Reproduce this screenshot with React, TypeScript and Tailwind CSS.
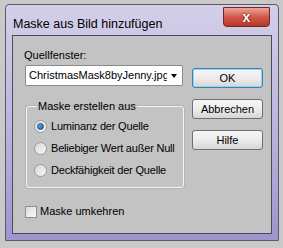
import React from "react";

const font = { fontFamily: '"Liberation Sans", Arial, sans-serif' };

function Radio({ label, checked }: { label: string; checked?: boolean }) {
  return (
    <div className="flex items-center h-[13px]">
      <span className="shrink-0 w-[13px] h-[13px] rounded-full border border-[#9a9a9a] bg-gradient-to-br from-[#d8d8d8] to-[#f8f8f8] flex items-center justify-center">
        {checked && (
          <span className="w-[7px] h-[7px] rounded-full bg-gradient-to-br from-[#6fb6e8] to-[#1a5fa0] border border-[#1c4f7f]" />
        )}
      </span>
      <span className="ml-[4px] text-[11px] leading-[13px] tracking-[-0.2px] whitespace-nowrap text-black">{label}</span>
    </div>
  );
}

function Button({ label, focused }: { label: string; focused?: boolean }) {
  return (
    <div
      className={`w-[71px] h-[20px] rounded-[3px] flex items-center justify-center text-[11px] text-black bg-gradient-to-b from-[#f6f6f6] via-[#ececec] to-[#d6d6d6] ${
        focused
          ? "border border-[#3c7fb1] shadow-[inset_0_0_0_1px_#9cd2f0]"
          : "border border-[#707070]"
      }`}
    >
      {label}
    </div>
  );
}

export default function App() {
  return (
    <div className="w-[283px] h-[248px] bg-[#c9c9c9] pt-[4px] pl-[5px] pr-[4px] pb-[7px]" style={font}>
      {/* window frame */}
      <div className="w-full h-full flex flex-col border border-[#5a5a66] bg-gradient-to-b from-[#d3cfe8] via-[#bdb5de] to-[#a093cf] rounded-t-[4px]">
        {/* title bar */}
        <div className="h-[30px] flex items-start pl-[7px] pr-[8px]">
          <span className="mt-[12px] text-[12.5px] leading-[14px] text-black">Maske aus Bild hinzufügen</span>
          <div className="ml-auto mt-[2px] w-[47px] h-[20px] rounded-b-[4px] border border-[#6e2a22] bg-gradient-to-b from-[#e8a59a] via-[#d2574a] to-[#b8372b] flex items-center justify-center">
            <span className="text-white text-[14px] font-bold leading-none drop-shadow-[0_0_1px_#5a1a14]">x</span>
          </div>
        </div>
        {/* client area */}
        <div className="flex-1 mx-[6px] mb-[6px] border border-[#4a4a58] bg-[#c3c3c3] flex pl-[11px] pt-[13px]">
          <div className="w-[159px] flex flex-col">
            <span className="text-[11px] leading-[13px] text-black">Quellfenster:</span>
            <div className="mt-[3px] ml-[1px] h-[21px] w-[158px] rounded-[2px] border border-[#8a8a8a] bg-white flex items-center pl-[3px] pr-[5px]">
              <span className="text-[11px] leading-[13px] text-black whitespace-nowrap overflow-hidden w-[138px]">ChristmasMask8byJenny.jpg</span>
              <span className="ml-auto w-0 h-0 border-l-[3.5px] border-r-[3.5px] border-t-[4px] border-l-transparent border-r-transparent border-t-black" />
            </div>
            <fieldset className="mt-[14px] ml-[2px] w-[158px] h-[88px] border border-[#f4f4f4] rounded-[3px] shadow-[0_0_0_1px_#b4b4b4] px-[7px] pt-[6px]">
              <legend className="ml-[3px] px-[1px] text-[11px] leading-[13px] text-black">Maske erstellen aus</legend>
              <div className="flex flex-col gap-[9px] mt-[1px]">
                <Radio label="Luminanz der Quelle" checked />
                <Radio label="Beliebiger Wert außer Null" />
                <Radio label="Deckfähigkeit der Quelle" />
              </div>
            </fieldset>
            <div className="mt-[17px] ml-[1px] flex items-center">
              <span className="w-[12px] h-[12px] border border-[#8e8f8f] bg-gradient-to-br from-[#dcdcdc] to-[#fafafa]" />
              <span className="ml-[3px] text-[11px] leading-[13px] text-black">Maske umkehren</span>
            </div>
          </div>
          <div className="ml-[9px] pt-[19px] flex flex-col gap-[11px]">
            <Button label="OK" focused />
            <Button label="Abbrechen" />
            <Button label="Hilfe" />
          </div>
        </div>
      </div>
    </div>
  );
}
